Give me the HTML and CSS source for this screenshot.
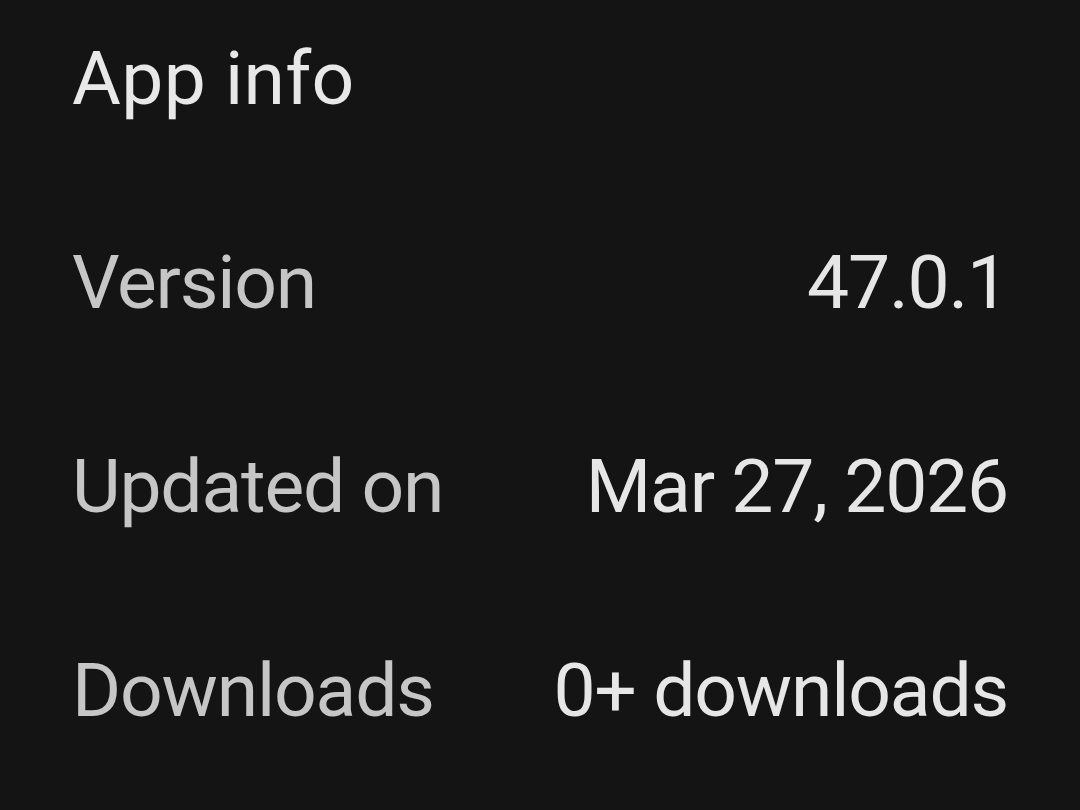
FILE: index.html
```html
<!DOCTYPE html>
<html lang="en">
<head>
    <meta charset="UTF-8">
    <meta name="viewport" content="width=device-width, initial-scale=1.0">
    <title>App info</title>
    <link rel="stylesheet" href="styles.css">
</head>
<body>
    <div class="container">
        <h1 class="title">App info</h1>
        <div class="info-list">
            <div class="info-row">
                <span class="label">Version</span>
                <span class="value">47.0.1</span>
            </div>
            <div class="info-row">
                <span class="label">Updated on</span>
                <span class="value">Mar 27, 2026</span>
            </div>
            <div class="info-row">
                <span class="label">Downloads</span>
                <span class="value">0+ downloads</span>
            </div>
        </div>
    </div>
</body>
</html>
```

FILE: styles.css
```css
html, body {
    height: 100%;
}
body {
    font-family: Roboto, "Noto Sans", sans-serif;
    background-color: #141414;
    margin: 0;
    overflow: hidden;
}
.container {
    padding: 28px 72px 0 72px;
}
.title {
    margin: 0;
    font-size: 75px;
    font-weight: 400;
    line-height: 100px;
    letter-spacing: 0.3px;
    color: #e8e8e8;
}
.info-list {
    display: flex;
    flex-direction: column;
    gap: 104px;
    margin-top: 104px;
}
.info-row {
    display: flex;
    justify-content: space-between;
    font-size: 75px;
    line-height: 100px;
    letter-spacing: -1.2px;
}
.label {
    color: #c6c6c6;
}
.value {
    color: #e6e6e6;
}
```
